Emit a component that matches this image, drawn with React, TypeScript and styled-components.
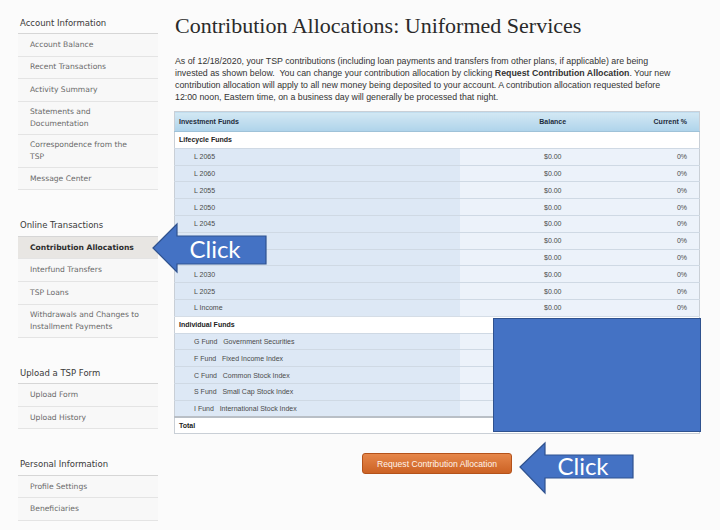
import React from 'react';
import styled, { createGlobalStyle } from 'styled-components';

const GlobalStyle = createGlobalStyle`
  html, body {
    margin: 0;
    padding: 0;
    background: #fbfbfb;
  }
`;

const StyledPage = styled.div`
  width: 720px;
  height: 530px;
  position: relative;
  overflow: hidden;
  display: flex;
  gap: 16px;
  padding-left: 18px;
  box-sizing: border-box;
  background: #fbfbfb;
`;

const StyledSidebar = styled.nav`
  width: 140px;
  flex-shrink: 0;
  padding-top: 12px;
  display: flex;
  flex-direction: column;
  gap: 24.5px;
  font-family: 'DejaVu Sans', Verdana, sans-serif;
`;

const StyledSection = styled.div`
  display: flex;
  flex-direction: column;
`;

const StyledSectionTitle = styled.div`
  height: 22px;
  display: flex;
  align-items: center;
  padding-left: 2px;
  box-sizing: border-box;
  border-bottom: 1px solid #d6d6d6;
  color: #3a3a3a;
  font-size: 8.5px;
`;

const StyledNavItem = styled.div<{ $active?: boolean }>`
  min-height: 22.6px;
  display: flex;
  align-items: center;
  padding: 4px 0 4px 12px;
  box-sizing: border-box;
  border-bottom: 1px solid #e4e4e4;
  background: ${p => (p.$active ? '#e8e6e3' : '#f8f8f8')};
  color: ${p => (p.$active ? '#2e2e2e' : '#6a6a6a')};
  font-size: 7.6px;
  font-weight: ${p => (p.$active ? 700 : 400)};
  line-height: 12px;
`;

const StyledMain = styled.main`
  width: 527px;
  padding-top: 13px;
  display: flex;
  flex-direction: column;
`;

const StyledTitle = styled.h1`
  margin: 0 0 0 1px;
  font-family: 'Liberation Serif', 'Times New Roman', serif;
  font-weight: 400;
  font-size: 22px;
  line-height: 26px;
  color: #2a2a2a;
`;

const StyledIntro = styled.p`
  margin: 16px 0 0 1px;
  font-family: 'Liberation Sans', Arial, sans-serif;
  font-size: 8.8px;
  line-height: 12px;
  color: #333;
  white-space: nowrap;
`;

const StyledTableWrap = styled.div`
  position: relative;
  margin-top: 8px;
`;

const StyledTable = styled.table`
  width: 526px;
  border-collapse: collapse;
  border: 1px solid #c9cfd6;
  font-family: 'Liberation Sans', Arial, sans-serif;
  font-size: 7px;
  color: #333;
`;

const StyledHeadCell = styled.th<{ $align: 'left' | 'center' | 'right' }>`
  height: 19px;
  padding: 0 ${p => (p.$align === 'right' ? '12px' : '4px')} 0 4px;
  text-align: ${p => p.$align};
  background: linear-gradient(#d3e8f4, #aed3ea);
  color: #1d2c3c;
  font-weight: 700;
  border-bottom: 1px solid #9fc2d8;
`;

const StyledGroupCell = styled.td<{ $total?: boolean }>`
  height: 16.8px;
  padding: 0 4px;
  box-sizing: border-box;
  background: #fff;
  font-weight: 700;
  color: #222;
  border-top: ${p => (p.$total ? '2px solid #b9bfc6' : '1px solid #d5dde6')};
`;

const StyledFundRow = styled.tr`
  height: 16.8px;
  border-top: 1px solid #cfd9e4;
`;

const StyledFundCell = styled.td<{ $kind: 'name' | 'balance' | 'pct' }>`
  padding: ${p => (p.$kind === 'name' ? '0 0 0 19px' : p.$kind === 'pct' ? '0 12px 0 0' : '0')};
  text-align: ${p => (p.$kind === 'name' ? 'left' : p.$kind === 'pct' ? 'right' : 'center')};
  background: ${p => (p.$kind === 'name' ? '#dde8f5' : '#ecf2fa')};
  color: #4a4a4a;
  white-space: pre;
`;

const StyledCover = styled.div`
  position: absolute;
  left: 319px;
  top: 207px;
  width: 208px;
  height: 114px;
  box-sizing: border-box;
  background: #4472c4;
  border: 1px solid #2f528f;
`;

const StyledButtonRow = styled.div`
  width: 526px;
  display: flex;
  justify-content: center;
  margin-top: 19px;
`;

const StyledButton = styled.button`
  width: 150px;
  height: 21px;
  padding: 0;
  border: 1px solid #b4521a;
  border-radius: 3px;
  background: linear-gradient(#e6874a, #cc6224);
  color: #fff4ec;
  font-family: 'Liberation Sans', Arial, sans-serif;
  font-size: 8.6px;
  cursor: pointer;
`;

const StyledCallout = styled.svg`
  position: absolute;
  overflow: visible;
`;

const sections = [
  {
    title: 'Account Information',
    items: [
      'Account Balance',
      'Recent Transactions',
      'Activity Summary',
      'Statements and\nDocumentation',
      'Correspondence from the\nTSP',
      'Message Center',
    ],
  },
  {
    title: 'Online Transactions',
    items: [
      'Contribution Allocations',
      'Interfund Transfers',
      'TSP Loans',
      'Withdrawals and Changes to\nInstallment Payments',
    ],
  },
  { title: 'Upload a TSP Form', items: ['Upload Form', 'Upload History'] },
  { title: 'Personal Information', items: ['Profile Settings', 'Beneficiaries'] },
];

const lifecycle = ['L 2065', 'L 2060', 'L 2055', 'L 2050', 'L 2045', 'L 2040', 'L 2035', 'L 2030', 'L 2025', 'L Income'];

const individual = [
  'G Fund   Government Securities',
  'F Fund   Fixed Income Index',
  'C Fund   Common Stock Index',
  'S Fund   Small Cap Stock Index',
  'I Fund   International Stock Index',
];

const ClickArrow: React.FC<{ left: number; top: number; points: string; tx: number; ty: number }> = ({
  left,
  top,
  points,
  tx,
  ty,
}) => (
  <StyledCallout width="125" height="58" style={{ left, top }}>
    <polygon points={points} fill="#4472c4" stroke="#2f528f" strokeWidth="1.2" strokeLinejoin="miter" />
    <text x={tx} y={ty} fill="#ffffff" fontFamily="Lato, 'Open Sans', sans-serif" fontSize="24" textAnchor="middle">
      Click
    </text>
  </StyledCallout>
);

const App: React.FC = () => {
  const renderFund = (name: string) => (
    <StyledFundRow key={name}>
      <StyledFundCell $kind="name">{name}</StyledFundCell>
      <StyledFundCell $kind="balance">$0.00</StyledFundCell>
      <StyledFundCell $kind="pct">0%</StyledFundCell>
    </StyledFundRow>
  );

  return (
    <>
      <GlobalStyle />
      <StyledPage>
        <StyledSidebar>
          {sections.map(section => (
            <StyledSection key={section.title}>
              <StyledSectionTitle>{section.title}</StyledSectionTitle>
              {section.items.map(item => (
                <StyledNavItem key={item} $active={item === 'Contribution Allocations'}>
                  <span style={{ whiteSpace: 'pre-line' }}>{item}</span>
                </StyledNavItem>
              ))}
            </StyledSection>
          ))}
        </StyledSidebar>

        <StyledMain>
          <StyledTitle>Contribution Allocations: Uniformed Services</StyledTitle>
          <StyledIntro>
            As of 12/18/2020, your TSP contributions (including loan payments and transfers from other plans, if applicable) are being
            <br />
            invested as shown below.&nbsp; You can change your contribution allocation by clicking <b>Request Contribution Allocation</b>. Your new
            <br />
            contribution allocation will apply to all new money being deposited to your account. A contribution allocation requested before
            <br />
            12:00 noon, Eastern time, on a business day will generally be processed that night.
          </StyledIntro>

          <StyledTableWrap>
            <StyledTable>
              <colgroup>
                <col style={{ width: 286 }} />
                <col style={{ width: 186 }} />
                <col style={{ width: 54 }} />
              </colgroup>
              <thead>
                <tr>
                  <StyledHeadCell $align="left">Investment Funds</StyledHeadCell>
                  <StyledHeadCell $align="center">Balance</StyledHeadCell>
                  <StyledHeadCell $align="right">Current %</StyledHeadCell>
                </tr>
              </thead>
              <tbody>
                <tr>
                  <StyledGroupCell colSpan={3}>Lifecycle Funds</StyledGroupCell>
                </tr>
                {lifecycle.map(renderFund)}
                <tr>
                  <StyledGroupCell colSpan={3}>Individual Funds</StyledGroupCell>
                </tr>
                {individual.map(renderFund)}
                <tr>
                  <StyledGroupCell colSpan={3} $total>
                    Total
                  </StyledGroupCell>
                </tr>
              </tbody>
            </StyledTable>
            <StyledCover />
          </StyledTableWrap>

          <StyledButtonRow>
            <StyledButton>Request Contribution Allocation</StyledButton>
          </StyledButtonRow>
        </StyledMain>

        <ClickArrow
          left={150}
          top={220}
          points="3,28 27,4 27,16 116,16 116,44 27,44 27,52"
          tx={65}
          ty={38}
        />
        <ClickArrow
          left={515}
          top={440}
          points="5,27 30,3 30,15 118,15 118,38 30,38 30,53"
          tx={68}
          ty={35}
        />
      </StyledPage>
    </>
  );
};

export default App;
